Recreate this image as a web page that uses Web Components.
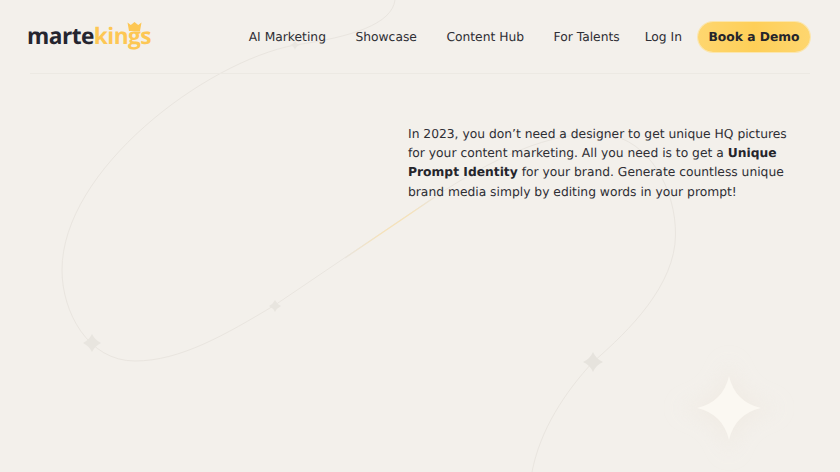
<!DOCTYPE html>
<html>
<head>
<meta charset="utf-8">
<style>
html, body { margin: 0; height: 100%; }
body { background: #f3f0eb; font-family: "DejaVu Sans", sans-serif; color: #25252b; overflow: hidden; text-rendering: geometricPrecision; }
</style>
</head>
<body>
<hero-page></hero-page>
<script>
class HeroBackdrop extends HTMLElement {
    constructor(){
        super();
        var shadowRoot = this.attachShadow({mode:"open"});
        shadowRoot.innerHTML = `
            <style>
                :host { display: block; position: absolute; inset: 0; pointer-events: none; }
                svg { display: block; }
            </style>
            <svg width="840" height="472" viewBox="0 0 840 472" fill="none">
                <defs>
                    <linearGradient id="gold" gradientUnits="userSpaceOnUse" x1="345" y1="262" x2="440" y2="197">
                        <stop offset="0" stop-color="#e9e5df"/>
                        <stop offset="0.4" stop-color="#f6e2b8"/>
                        <stop offset="0.7" stop-color="#f6e2b8"/>
                        <stop offset="1" stop-color="#e9e5df"/>
                    </linearGradient>
                    <filter id="soft" x="-100%" y="-100%" width="300%" height="300%"><feGaussianBlur stdDeviation="10"/></filter>
                </defs>
                <path d="M395 0C392 24 352 37 295 45C205 62 62 170 62 270C62 312 88 361 135 361C180 361 225 335 275 305L433 198C490 160 550 130 605 134C650 140 676 190 675.500 235C675 285 630 330 593 362C565 392 540 430 532 472" stroke="#e9e5df" stroke-width="1"/>
                <path d="M345 258L435 197" stroke="url(#gold)" stroke-width="1.200"/>
                <path d="M92 334Q95 340 101 343Q95 346 92 352Q89 346 83 343Q89 340 92 334Z" fill="#e8e5df"/>
                <path d="M275 300Q277 304 281 306Q277 308 275 312Q273 308 269 306Q273 304 275 300Z" fill="#e8e5df"/>
                <path d="M593 352Q596 359 603 362Q596 365 593 372Q590 365 583 362Q590 359 593 352Z" fill="#e6e3dd"/>
                <path d="M295 40Q296 44 300 45Q296 46 295 50Q294 46 290 45Q294 44 295 40Z" fill="#e9e6e0"/>
                <path d="M729 358Q735 402 782 408Q735 414 729 458Q723 414 676 408Q723 402 729 358Z" fill="#efe8e0" opacity="0.55" filter="url(#soft)"/>
                <path d="M729 376Q735 402 761 408Q735 414 729 440Q723 414 697 408Q723 402 729 376Z" fill="#fbf8f2"/>
            </svg>
        `;
    }
}
customElements.define("hero-backdrop",HeroBackdrop);

class BrandLogo extends HTMLElement {
    constructor(){
        super();
        var shadowRoot = this.attachShadow({mode:"open"});
        shadowRoot.innerHTML = `
            <style>
                :host { display: inline-flex; position: relative; font: 700 22.700px/1 "Open Sans", sans-serif; letter-spacing: -0.55px; color: #25252f; }
                .gold { color: #fdc754; }
                svg { position: absolute; left: 100px; top: -3px; }
            </style>
            <span>marte<span class="gold">kings</span></span>
            <svg width="15" height="9" viewBox="0 0 15 9"><path d="M0.500 0.500L3.800 3L7.500 0L11.200 3L14.500 0.500L13 9H2Z" fill="#fdc754"/></svg>
        `;
    }
}
customElements.define("brand-logo",BrandLogo);

class NavLink extends HTMLElement {
    constructor(){
        super();
        var shadowRoot = this.attachShadow({mode:"open"});
        shadowRoot.innerHTML = `
            <style>
                :host { display: block; font-size: 12.300px; line-height: 20px; color: #2f2f35; white-space: nowrap; }
            </style>
            <slot></slot>
        `;
    }
}
customElements.define("nav-link",NavLink);

class DemoButton extends HTMLElement {
    constructor(){
        super();
        var shadowRoot = this.attachShadow({mode:"open"});
        shadowRoot.innerHTML = `
            <style>
                :host {
                    display: flex; align-items: center; justify-content: center;
                    box-sizing: border-box; width: 112px; height: 30px; border-radius: 15px;
                    font-size: 12.300px; font-weight: 700; color: #25252b; white-space: nowrap;
                    background: linear-gradient(90deg,#fed66f,#fecf58 50%,#fed66f);
                    box-shadow: 0 0 0 1px #fbe6ae;
                }
            </style>
            <slot></slot>
        `;
    }
}
customElements.define("demo-button",DemoButton);

class SiteHeader extends HTMLElement {
    constructor(){
        super();
        var shadowRoot = this.attachShadow({mode:"open"});
        shadowRoot.innerHTML = `
            <style>
                :host {
                    display: flex; align-items: center; box-sizing: border-box;
                    height: 74px; margin: 0 30px; border-bottom: 1px solid #ece9e3;
                    position: relative;
                }
                brand-logo { margin: 0 auto 0 -3px; }
                nav { display: flex; align-items: center; gap: 29.500px; margin-right: 25px; }
                demo-button { margin-left: 16px; }
            </style>
            <brand-logo></brand-logo>
            <nav>
                <nav-link>AI Marketing</nav-link>
                <nav-link>Showcase</nav-link>
                <nav-link>Content Hub</nav-link>
                <nav-link>For Talents</nav-link>
            </nav>
            <nav-link>Log In</nav-link>
            <demo-button>Book a Demo</demo-button>
        `;
    }
}
customElements.define("site-header",SiteHeader);

class HeroPage extends HTMLElement {
    constructor(){
        super();
        var shadowRoot = this.attachShadow({mode:"open"});
        shadowRoot.innerHTML = `
            <style>
                :host { display: block; position: relative; width: 840px; height: 472px; overflow: hidden; }
                main { position: relative; padding: 51px 40px 0 408px; }
                p { margin: 0; font-size: 12.300px; line-height: 19.200px; color: #2f2f35; white-space: nowrap; }
                b { color: #25252b; }
            </style>
            <hero-backdrop></hero-backdrop>
            <site-header></site-header>
            <main>
                <p>In 2023, you don’t need a designer to get unique HQ pictures<br>for your content marketing. All you need is to get a <b>Unique<br>Prompt Identity</b> for your brand. Generate countless unique<br>brand media simply by editing words in your prompt!</p>
            </main>
        `;
    }
}
customElements.define("hero-page",HeroPage);
</script>
</body>
</html>
